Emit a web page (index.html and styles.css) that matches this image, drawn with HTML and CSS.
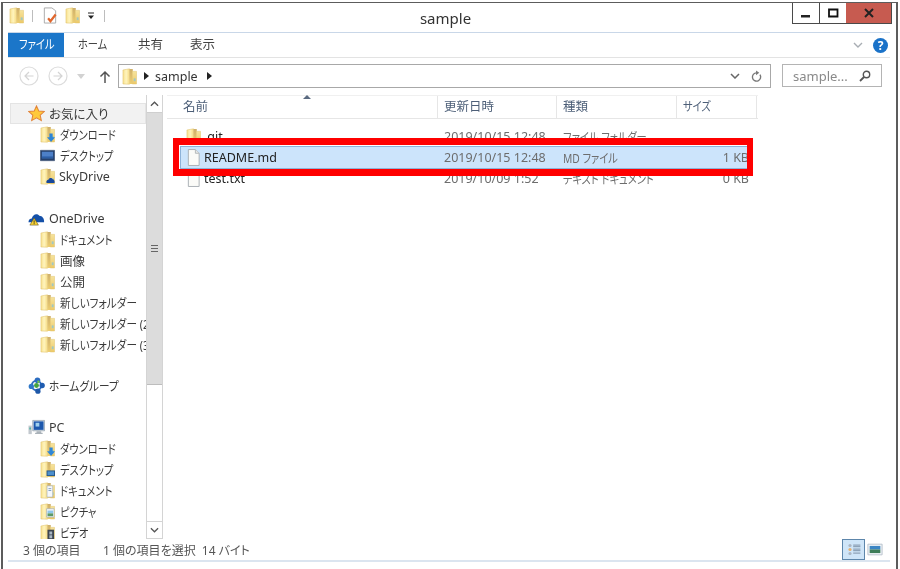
FILE: index.html
```html
<!DOCTYPE html>
<html lang="ja">
<head>
<meta charset="utf-8">
<title>sample</title>
<link rel="stylesheet" href="styles.css">
</head>
<body>
<svg class="defs" width="0" height="0" aria-hidden="true">
  <defs>
    <linearGradient id="fy" x1="0" y1="0" x2="1" y2="0"><stop offset="0" stop-color="#f7e08e"/><stop offset=".5" stop-color="#fff4bd"/><stop offset="1" stop-color="#f6dc84"/></linearGradient>
    <linearGradient id="fd" x1="0" y1="0" x2="0" y2="1"><stop offset="0" stop-color="#cfb06a"/><stop offset="1" stop-color="#eecf72"/></linearGradient>
    <linearGradient id="fr" x1="0" y1="0" x2="0" y2="1"><stop offset="0" stop-color="#f6e39c"/><stop offset="1" stop-color="#edc968"/></linearGradient>
    <symbol id="folder" viewBox="0 0 16 18">
      <path d="M1 2 8 .8v16.400L1 17z" fill="url(#fy)" stroke="#dcbd62" stroke-width=".5"/>
      <path d="M8 1h3.500v16H8z" fill="url(#fd)"/>
      <path d="M11 3.500h4.500V17H11z" fill="url(#fr)" stroke="#dfc06a" stroke-width=".5"/>
      <path d="M12.500 11h2v3h-2z" fill="#9ec7c4"/>
    </symbol>
    <symbol id="arrowdl" viewBox="0 0 16 18">
      <path d="M10 8h3.500v4H16l-4.200 5-4.300-5H10z" fill="#2f86d6"/>
    </symbol>
    <symbol id="cloudlet" viewBox="0 0 16 18">
      <path d="M7 16c-.8-2 .5-3.500 2-3.500.5-2 3.500-2.500 4.500-.5 1.500 0 2.500 2 2 4z" fill="#17489c"/>
    </symbol>
    <symbol id="screenlet" viewBox="0 0 16 18">
      <path d="M7 10h9v6H7z" fill="#27568a"/><path d="M8 11h7v4H8z" fill="#4d90cc"/>
    </symbol>
    <symbol id="doclet" viewBox="0 0 16 18">
      <path d="M7.500 4h6v12h-6z" fill="#f6f8fb" stroke="#9aa8b8" stroke-width=".6"/><path d="M9 7h3M9 9h3" stroke="#7f9fc2"/>
    </symbol>
    <symbol id="piclet" viewBox="0 0 16 18">
      <path d="M7 6h8v9H7z" fill="#f4f7fa" stroke="#98a5b2" stroke-width=".6"/><path d="M8 8h6v3H8z" fill="#8ec6ea"/><path d="M8 11h6v3H8z" fill="#5b9a66"/>
    </symbol>
    <symbol id="vidlet" viewBox="0 0 16 18">
      <path d="M8 6h7v11H8z" fill="#3c4550"/><path d="M10 8h3v3h-3zM10 12h3v3h-3z" fill="#a9b7c4"/>
    </symbol>
    <symbol id="star" viewBox="0 0 18 18">
      <path d="M9 1l2.400 5.300 5.800.6-4.300 3.900 1.200 5.700L9 13.600l-5.100 2.900 1.200-5.700L.8 6.900l5.800-.6z" fill="#ffc93c" stroke="#e2843a" stroke-width="1.100"/>
    </symbol>
    <symbol id="cloud" viewBox="0 0 18 16">
      <path d="M.5 12c0-3 2-4 3.500-4C5 4 9 2 12 5c3 0 5.500 3 5 7z" fill="#1450a8"/>
      <path d="M6.500 7.500 11 15H2z" fill="#f7d233" stroke="#5e5020" stroke-width=".6"/>
      <path d="M6.500 10v2.500M6.500 13v1" stroke="#222" stroke-width=".9"/>
    </symbol>
    <symbol id="home" viewBox="0 0 18 18">
      <circle cx="9" cy="9" r="5" fill="none" stroke="#2f6fc0" stroke-width="2"/>
      <circle cx="3.500" cy="10" r="2.800" fill="#2f78c8"/><circle cx="10" cy="3.500" r="3" fill="#2b6cc0"/><circle cx="15" cy="9" r="2.800" fill="#1f5cb0"/><circle cx="10.500" cy="15" r="2.800" fill="#1e58a8"/><circle cx="9" cy="9" r="2.600" fill="#46a23e"/><circle cx="11" cy="5" r="1.300" fill="#6cc04a"/>
    </symbol>
    <symbol id="pc" viewBox="0 0 18 18">
      <path d="M.5 7h3.500v9H.5z" fill="#c2c8ce"/>
      <path d="M1.500 9h1.500v2H1.500z" fill="#3bb0a0"/>
      <path d="M5 1.500h12.500v11H5z" fill="#dbe4ec" stroke="#8796a4" stroke-width=".7"/>
      <path d="M6 2.500h10.500v9H6z" fill="#1d58ad"/><path d="M8 4h4v4H8z" fill="#9fd0ef"/>
      <path d="M9 13h5v1.500H9zM7.500 14.500h8v1.500h-8z" fill="#aab2b9"/>
    </symbol>
    <symbol id="screen" viewBox="0 0 16 14">
      <path d="M.5 1.500h15v11H.5z" fill="#25406c" stroke="#44587a" stroke-width=".8"/>
      <path d="M2 3h12v7H2z" fill="#4d80c8"/>
      <path d="M2 8h12v2H2z" fill="#2c5ea6"/>
    </symbol>
    <symbol id="page" viewBox="0 0 16 18">
      <path d="M2.500 .5h7.500l4 4v13H2.500z" fill="#fbfbf8" stroke="#a9aeb3"/>
      <path d="M10 .5v4h4" fill="#e6e7e6" stroke="#b3b7ba"/>
    </symbol>
  </defs>
</svg>

<div class="window">
  <header class="titlebar">
    <div class="qat">
      <svg class="ic qfold"><use href="#folder"/></svg>
      <span class="qsep"></span>
      <svg class="ic qdoc" viewBox="0 0 16 18"><path d="M2 1h8l4 3v13H2z" fill="#fff" stroke="#a8a8a8"/><path d="M6 12l2.500 3L14 8" fill="none" stroke="#e0662c" stroke-width="2.400"/></svg>
      <svg class="ic qfold"><use href="#folder"/></svg>
      <svg class="ic qdrop" viewBox="0 0 8 8"><path d="M1 1h6" stroke="#222"/><path d="M1 3.500h6L4 7z" fill="#222"/></svg>
      <span class="qsep"></span>
    </div>
    <div class="title">sample</div>
    <div class="caption">
      <div class="cbtn cmin"><svg viewBox="0 0 12 12" class="cglyph"><path d="M1 8h9v2.500H1z" fill="#222"/></svg></div>
      <div class="cbtn cmax"><svg viewBox="0 0 12 12" class="cglyph"><path d="M2 2.500h8.500v7H2z" fill="none" stroke="#111" stroke-width="1.800"/></svg></div>
      <div class="cbtn cclose"><svg viewBox="0 0 12 12" class="cglyph"><path d="M2 2l8 8M10 2l-8 8" stroke="#222" stroke-width="2"/></svg></div>
    </div>
  </header>

  <nav class="ribbon">
    <div class="tab tab-file"><span class="k">ファイル</span></div>
    <div class="tab tab-home"><span class="k">ホーム</span></div>
    <div class="tab tab-share">共有</div>
    <div class="tab tab-view">表示</div>
    <svg class="rchev" viewBox="0 0 10 6"><path d="M1 1l4 4 4-4" fill="none" stroke="#a8adb3" stroke-width="1.400"/></svg>
    <div class="help">?</div>
  </nav>

  <div class="navbar">
    <svg class="circ" viewBox="0 0 20 20"><circle cx="10" cy="10" r="9" fill="none" stroke="#dcdcdc" stroke-width="1.200"/><path d="M14.500 10h-8M10 6l-4 4 4 4" fill="none" stroke="#d4d4d4" stroke-width="1.200"/></svg>
    <svg class="circ" viewBox="0 0 20 20"><circle cx="10" cy="10" r="9" fill="none" stroke="#dcdcdc" stroke-width="1.200"/><path d="M5.500 10h8M10 6l4 4-4 4" fill="none" stroke="#d4d4d4" stroke-width="1.200"/></svg>
    <svg class="ndrop" viewBox="0 0 8 5"><path d="M0 0h8L4 5z" fill="#d2d2d2"/></svg>
    <svg class="nup" viewBox="0 0 12 14"><path d="M6 13V2M1.500 6.500 6 2l4.500 4.500" fill="none" stroke="#555" stroke-width="1.500"/></svg>
    <div class="address">
      <svg class="ic afold"><use href="#folder"/></svg>
      <svg class="tri tri1" viewBox="0 0 5 8"><path d="M0 0l5 4-5 4z" fill="#222"/></svg>
      <span class="crumb">sample</span>
      <svg class="tri" viewBox="0 0 5 8"><path d="M0 0l5 4-5 4z" fill="#222"/></svg>
      <svg class="achev" viewBox="0 0 10 6"><path d="M1 1l4 4 4-4" fill="none" stroke="#666" stroke-width="1.500"/></svg>
      <svg class="arefresh" viewBox="0 0 12 14"><path d="M9.800 5A4.500 4.500 0 1 1 6 3" fill="none" stroke="#777" stroke-width="1.500"/><path d="M5.500 .5 9 3 5.500 5.500z" fill="#777"/></svg>
    </div>
    <div class="search">
      <span>sample...</span>
      <svg class="sicon" viewBox="0 0 12 12"><circle cx="7.500" cy="4.500" r="3.200" fill="none" stroke="#555" stroke-width="1.400"/><path d="M5 7l-4 4" stroke="#555" stroke-width="1.800"/></svg>
    </div>
  </div>

  <main class="main">
    <aside class="sidebar">
      <div class="nrow top current"><svg class="ic i-top"><use href="#star"/></svg><span>お気に入り</span></div>
      <div class="nrow child"><svg class="ic i-child"><use href="#folder"/><use href="#arrowdl"/></svg><span class="k kn">ダウンロード</span></div>
      <div class="nrow child"><svg class="ic i-child"><use href="#screen"/></svg><span class="k kn">デスクトップ</span></div>
      <div class="nrow child"><svg class="ic i-child"><use href="#folder"/><use href="#cloudlet"/></svg><span>SkyDrive</span></div>
      <div class="ngap"></div>
      <div class="nrow top"><svg class="ic i-top"><use href="#cloud"/></svg><span>OneDrive</span></div>
      <div class="nrow child"><svg class="ic i-child"><use href="#folder"/></svg><span class="k kn">ドキュメント</span></div>
      <div class="nrow child"><svg class="ic i-child"><use href="#folder"/></svg><span class="kn">画像</span></div>
      <div class="nrow child"><svg class="ic i-child"><use href="#folder"/></svg><span class="kn">公開</span></div>
      <div class="nrow child"><svg class="ic i-child"><use href="#folder"/></svg><span class="k kn kmix">新しいフォルダー</span></div>
      <div class="nrow child"><svg class="ic i-child"><use href="#folder"/></svg><span class="k kn kmix">新しいフォルダー (2)</span></div>
      <div class="nrow child"><svg class="ic i-child"><use href="#folder"/></svg><span class="k kn kmix">新しいフォルダー (3)</span></div>
      <div class="ngap ngap-s"></div>
      <div class="nrow top"><svg class="ic i-top"><use href="#home"/></svg><span class="k kmix">ホームグループ</span></div>
      <div class="ngap"></div>
      <div class="nrow top"><svg class="ic i-top"><use href="#pc"/></svg><span>PC</span></div>
      <div class="nrow child"><svg class="ic i-child"><use href="#folder"/><use href="#arrowdl"/></svg><span class="k kn">ダウンロード</span></div>
      <div class="nrow child"><svg class="ic i-child"><use href="#folder"/><use href="#screenlet"/></svg><span class="k kn">デスクトップ</span></div>
      <div class="nrow child"><svg class="ic i-child"><use href="#folder"/><use href="#doclet"/></svg><span class="k kn">ドキュメント</span></div>
      <div class="nrow child"><svg class="ic i-child"><use href="#folder"/><use href="#piclet"/></svg><span class="k kn">ピクチャ</span></div>
      <div class="nrow child"><svg class="ic i-child"><use href="#folder"/><use href="#vidlet"/></svg><span class="k kn">ビデオ</span></div>
    </aside>

    <div class="scrollbar">
      <div class="sbtn"><svg viewBox="0 0 10 6" class="sarrow"><path d="M1 5l4-4 4 4" fill="none" stroke="#555" stroke-width="1.400"/></svg></div>
      <div class="thumb"><span class="grip"></span></div>
      <div class="strack"></div>
      <div class="sbtn sbtn-down"><svg viewBox="0 0 10 6" class="sarrow"><path d="M1 1l4 4 4-4" fill="none" stroke="#555" stroke-width="1.400"/></svg></div>
    </div>

    <section class="files">
      <div class="thead">
        <div class="th th-name">名前<svg class="sort" viewBox="0 0 8 4"><path d="M4 0l4 4H0z" fill="#5a6a80"/></svg></div>
        <div class="th">更新日時</div>
        <div class="th">種類</div>
        <div class="th"><span class="k">サイズ</span></div>
      </div>
      <div class="frow">
        <div class="fname"><svg class="ic i-file"><use href="#folder"/></svg><span>.git</span></div>
        <div class="fcell">2019/10/15 12:48</div>
        <div class="fcell"><span class="k">ファイル フォルダー</span></div>
        <div class="fcell fsize"></div>
      </div>
      <div class="frow selected">
        <div class="fname"><svg class="ic i-file"><use href="#page"/></svg><span>README.md</span></div>
        <div class="fcell">2019/10/15 12:48</div>
        <div class="fcell"><span class="k">MD ファイル</span></div>
        <div class="fcell fsize">1 KB</div>
      </div>
      <div class="frow">
        <div class="fname"><svg class="ic i-file"><use href="#page"/></svg><span>test.txt</span></div>
        <div class="fcell">2019/10/09 1:52</div>
        <div class="fcell"><span class="k">テキスト ドキュメント</span></div>
        <div class="fcell fsize">0 KB</div>
      </div>
    </section>
  </main>

  <footer class="status">
    <span class="st st1">3 個の項目</span>
    <span class="st st2">1 個の項目を選択&nbsp;&nbsp;14 バイト</span>
    <div class="views">
      <div class="vbtn von"><svg viewBox="0 0 20 18" class="vglyph"><circle cx="5" cy="4" r="2" fill="#a9b6c4"/><circle cx="5" cy="9" r="2" fill="#e8b070"/><circle cx="5" cy="14" r="2" fill="#a9b6c4"/><path d="M9 3.500h9M9 5.500h9M9 8.500h9M9 10.500h9M9 13.500h9" stroke="#6a7e94"/></svg></div>
      <div class="vbtn"><svg viewBox="0 0 18 16" class="vglyph"><path d="M1 2h16v12H1z" fill="#eef2f6" stroke="#b5bfca"/><path d="M3 4h12v4H3z" fill="#3c86c4"/><path d="M3 8h12v4H3z" fill="#3d7c58"/></svg></div>
    </div>
  </footer>
</div>
<div class="redbox"></div>
</body>
</html>
```
FILE: styles.css
```css
* { box-sizing: border-box; }
html, body { margin: 0; padding: 0; }
body {
  position: relative;
  width: 900px;
  height: 569px;
  overflow: hidden;
  background: #fff;
  font-family: "Noto Sans", "Noto Sans CJK JP", sans-serif;
  font-size: 12px;
  font-feature-settings: "palt";
  color: #333;
}
.defs { position: absolute; }
.ic { display: block; flex: none; }
/* condensed katakana, as the UI font of the original draws it */
.k { display: inline-block; transform: scaleX(.82); transform-origin: left center; white-space: nowrap; }
.kmix { transform: scaleX(.85); }
.kn { margin-left: 1px; }

.window {
  display: flex;
  flex-direction: column;
  width: 897px;
  height: 567px;
  margin: 2px 0 0 1px;
  border-top: 1px solid #5c5c5c;
  border-left: 2px solid #5c5c5c;
  border-right: 2px solid #5c5c5c;
  filter: blur(.35px);
}

/* title bar */
.titlebar { display: flex; height: 29px; flex: none; }
.qat { display: flex; align-items: center; width: 110px; padding: 0 0 4px 6px; flex: none; }
.qfold { width: 15px; height: 17px; }
.qsep { width: 1px; height: 12px; background: #bdbdbd; margin: 0 9px 0 8px; }
.qdoc { width: 16px; height: 17px; margin: 0 7px 0 0; }
.qdrop { width: 8px; height: 8px; margin-left: 7px; }
.qsep:last-child { margin-left: 9px; }
.title { flex: 1; text-align: center; font-size: 15px; line-height: 31px; color: #333; padding-right: 14px; }
.caption { display: flex; height: 21px; margin-right: 4px; border: 1px solid #4a4a4a; border-top: 0; flex: none; }
.cbtn { display: flex; align-items: center; justify-content: center; height: 100%; }
.cmin { width: 27px; border-right: 1px solid #4a4a4a; }
.cmax { width: 26px; }
.cclose { width: 45px; background: #c75b50; }
.cglyph { width: 12px; height: 12px; }

/* ribbon */
.ribbon {
  display: flex;
  align-items: center;
  height: 26px;
  margin: 0 6px 0 5px;
  border-top: 1px solid #c9d7e8;
  border-bottom: 1px solid #e3e3e3;
  flex: none;
}
.tab { font-size: 12.500px; color: #444; line-height: 24px; }
.tab-file { width: 56px; padding-left: 11px; background: #1b76c9; color: #fff; align-self: stretch; }
.tab-home { width: 36px; margin-left: 14px; }
.tab-share { margin-left: 24px; }
.tab-view { margin-left: 27px; }
.rchev { width: 10px; height: 6px; margin-left: auto; }
.help {
  width: 15px; height: 15px; margin: 0 2px 0 10px; border-radius: 50%;
  background: #1a72c8; color: #fff; font-size: 12px; font-weight: 700; line-height: 15px; text-align: center;
}

/* nav bar */
.navbar { display: flex; align-items: flex-start; height: 37px; padding: 6px 0 0 16px; flex: none; }
.circ { width: 20px; height: 20px; margin: 2px 9px 0 0; flex: none; }
.ndrop { width: 8px; height: 5px; margin: 10px 14px 0 0; flex: none; }
.nup { width: 12px; height: 14px; margin: 6px 7px 0 0; flex: none; }
.address {
  display: flex; align-items: center; width: 653px; height: 24px;
  padding: 0 5px 0 3px; border: 1px solid #a8a8a8; flex: none;
}
.afold { width: 15px; height: 17px; }
.tri { width: 5px; height: 8px; flex: none; }
.tri1 { margin-left: 7px; }
.crumb { font-size: 12.500px; margin: 0 9px 0 6px; color: #333; }
.achev { width: 10px; height: 6px; margin-left: auto; }
.arefresh { width: 11px; height: 13px; margin: 0 3px 0 11px; }
.search {
  display: flex; align-items: center; justify-content: space-between; width: 100px; height: 23px;
  margin-left: 11px; padding: 0 10px; border: 1px solid #b4b4b4; color: #8a8a8a; font-size: 13px; flex: none;
}
.sicon { width: 12px; height: 12px; }

/* main */
.main { display: flex; height: 444px; padding-left: 7px; flex: none; }
.sidebar { width: 136px; padding-top: 8px; overflow: hidden; white-space: nowrap; flex: none; }
.nrow { display: flex; align-items: center; height: 21px; font-size: 12.500px; color: #3a3a3a; }
.top { padding-left: 18px; gap: 4px; }
.child { padding-left: 30px; gap: 4px; }
.i-top { width: 17px; height: 17px; }
.i-child { width: 15px; height: 17px; }
.current { background: #f2f2f2; border: 1px solid #e4e4e4; padding-left: 17px; }
.ngap { height: 21px; }
.ngap-s { height: 20px; }

.scrollbar { display: flex; flex-direction: column; width: 17px; height: 444px; border: 1px solid #d4d4d4; border-top: 0; flex: none; }
.sbtn { display: flex; align-items: center; justify-content: center; height: 17px; flex: none; }
.sbtn-down { border-top: 1px solid #d4d4d4; }
.sarrow { width: 9px; height: 6px; }
.thumb { display: flex; align-items: center; justify-content: center; height: 273px; background: #dcdcdc; border-top: 1px solid #cfcfcf; border-bottom: 1px solid #bdbdbd; flex: none; }
.grip { width: 7px; height: 7px; border-top: 1px solid #666; border-bottom: 1px solid #666; background: linear-gradient(#666, #666) center / 100% 1px no-repeat; }
.strack { flex: 1; }

/* files */
.files { flex: 1; padding: 0 0 0 4px; }
.thead { display: grid; grid-template-columns: 271px 119px 120px 80px; height: 24px; margin-bottom: 7px; border-top: 1px solid #f0f0f0; border-bottom: 1px solid #e6e6e6; width: 591px; }
.th { position: relative; padding-left: 6px; border-right: 1px solid #e6e6e6; font-size: 12.500px; line-height: 22px; color: #4d5f78; }
.th-name { padding-left: 16px; }
.sort { position: absolute; left: 136px; top: -1px; width: 8px; height: 4px; }
.frow { display: grid; grid-template-columns: 271px 119px 120px 80px; align-items: center; height: 21px; width: 591px; color: #6d6d6d; font-size: 12.500px; }
.selected { margin-left: 13px; height: 23px; width: 570px; background: #cce4fb; border: 1px solid #8db2d8; grid-template-columns: 257px 119px 120px 72px; margin-top: -1px; margin-bottom: -1px; }
.fname { display: flex; align-items: center; gap: 3px; padding-left: 19px; color: #222; }
.selected .fname { padding-left: 5px; }
.i-file { width: 15px; height: 17px; }
.fcell { padding-left: 6px; white-space: nowrap; }
.fsize { padding: 0 8px 0 0; text-align: right; }
.selected .fsize { padding-right: 0; }

/* status */
.status { display: flex; align-items: center; height: 23px; margin: 0 6px 0 5px; border-bottom: 2px solid #dbe5f0; color: #555; font-size: 12px; flex: none; }
.st { position: relative; }
.st1 { margin-left: 15px; width: 80px; }
.st2 { width: 155px; }
.views { display: flex; gap: 1px; margin-left: auto; padding-right: 6px; align-self: flex-start; }
.vbtn { display: flex; align-items: center; justify-content: center; width: 18px; height: 21px; }
.von { width: 23px; background: #cfe5f8; border: 1px solid #5d86ab; }
.vglyph { width: 16px; height: 15px; }

/* annotation */
.redbox {
  position: absolute; left: 173px; top: 138px; width: 580px; height: 38px;
  border: solid #f00; border-width: 7px 6px;
  filter: blur(.35px);
}
```
